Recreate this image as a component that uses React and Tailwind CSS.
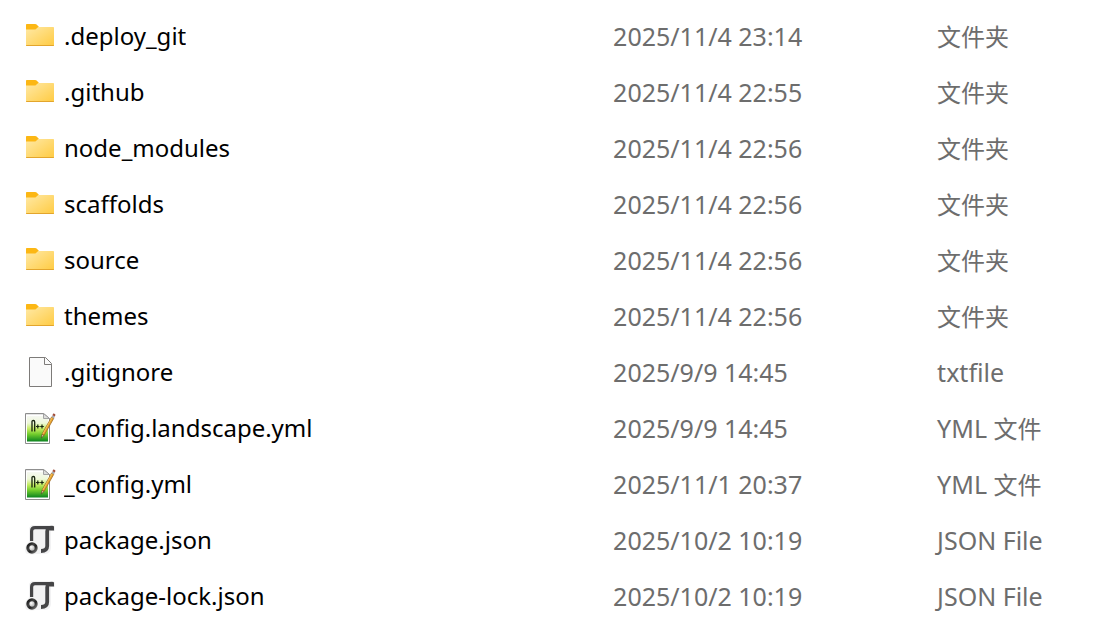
import React from 'react';

const files = [
  { name: '.deploy_git', date: '2025/11/4 23:14', kind: 'folder' },
  { name: '.github', date: '2025/11/4 22:55', kind: 'folder' },
  { name: 'node_modules', date: '2025/11/4 22:56', kind: 'folder' },
  { name: 'scaffolds', date: '2025/11/4 22:56', kind: 'folder' },
  { name: 'source', date: '2025/11/4 22:56', kind: 'folder' },
  { name: 'themes', date: '2025/11/4 22:56', kind: 'folder' },
  { name: '.gitignore', date: '2025/9/9 14:45', kind: 'text' },
  { name: '_config.landscape.yml', date: '2025/9/9 14:45', kind: 'yml' },
  { name: '_config.yml', date: '2025/11/1 20:37', kind: 'yml' },
  { name: 'package.json', date: '2025/10/2 10:19', kind: 'json' },
  { name: 'package-lock.json', date: '2025/10/2 10:19', kind: 'json' },
];

const FolderIcon = () => (
  <svg viewBox="0 0 32 32" className="size-8 shrink-0" aria-hidden="true">
    <defs>
      <linearGradient id="folder-front" x1="0" y1="0" x2="1" y2="1">
        <stop offset="0" stopColor="#ffe9a6" />
        <stop offset="1" stopColor="#ffcb42" />
      </linearGradient>
    </defs>
    <path d="M3 4h8.2c.6 0 1 .2 1.4.6L15 7l-3.4 4H2V5c0-.6.4-1 1-1z" fill="#fcb714" />
    <path d="M2 9.6h8.6c.6 0 1-.2 1.4-.6L14.2 7H29c.6 0 1 .4 1 1v17c0 .6-.4 1-1 1H3c-.6 0-1-.4-1-1z" fill="url(#folder-front)" />
    <path d="M2 25h28c0 .7-.4 1-1 1H3c-.6 0-1-.3-1-1z" fill="#e3a52c" />
  </svg>
);

const TextIcon = () => (
  <svg viewBox="0 0 32 32" className="size-8 shrink-0" aria-hidden="true">
    <path d="M5.5 1.5h16l6 6v23h-22z" fill="#fafafa" stroke="#7d7b79" />
    <path d="M20.5 1.5v7h7" fill="#fafafa" stroke="#7d7b79" />
  </svg>
);

const NotepadIcon = () => (
  <svg viewBox="0 0 32 32" className="size-8 shrink-0" aria-hidden="true">
    <defs>
      <linearGradient id="notepad-page" x1="0" y1="0" x2="0" y2="1">
        <stop offset="0" stopColor="#f6f8f2" />
        <stop offset=".28" stopColor="#eef8d8" />
        <stop offset=".5" stopColor="#c4ec62" />
        <stop offset=".72" stopColor="#70cb2c" />
        <stop offset="1" stopColor="#0b8420" />
      </linearGradient>
    </defs>
    <path d="M1.5 1.5h18l6 5v25h-24z" fill="#fff" stroke="#8c8c8c" />
    <path d="M3 4h16v3h5v22.5H3z" fill="url(#notepad-page)" />
    <path d="M2.5 2h17" stroke="#999" strokeDasharray="1 1" />
    <path d="M19.5 1.5l6 5h-6z" fill="#ddd" stroke="#909090" strokeWidth=".8" />
    <path d="M8 19.5V9.5c0-1.4 2.7-1.4 2.7.4v9.6" fill="none" stroke="#17230f" strokeWidth="1.3" />
    <path d="M12 14.5h3.6M13.8 12.5v4M16.2 14.5h3.6M18 12.5v4" stroke="#17230f" strokeWidth="1.2" />
    <path d="M17.3 26l.8-4 2 1.3z" fill="#f1d2a0" stroke="#4b3820" strokeWidth=".6" />
    <path d="M18.1 22L27.6 5l2.2 1.3-9.7 17z" fill="#e9a32c" stroke="#95601c" strokeWidth=".7" />
    <path d="M18.8 22L28 5.6" stroke="#ffd36c" strokeWidth=".7" />
    <path d="M27.6 5l.9-1.8 2.4 1.4-1 1.8z" fill="#a9acb2" />
    <path d="M28.4 3.2l.7-1.4c.5-.9 2.5.2 2.3 1.3l-.5 1.5z" fill="#a3503c" />
  </svg>
);

const JsonIcon = () => (
  <svg viewBox="0 0 32 32" className="size-8 shrink-0" aria-hidden="true">
    <defs>
      <linearGradient id="json-ring" x1="0" y1="0" x2="1" y2="1">
        <stop offset="0" stopColor="#111" />
        <stop offset=".35" stopColor="#444" />
        <stop offset=".6" stopColor="#222" />
        <stop offset="1" stopColor="#777" />
      </linearGradient>
      <radialGradient id="json-ball" cx=".4" cy=".4" r=".6">
        <stop offset="0" stopColor="#fff" />
        <stop offset="1" stopColor="#999" />
      </radialGradient>
    </defs>
    <path d="M9 1h19c2 0 3 1 3 3v3h-4v16c0 4-2 7-6 7H4c-2 0-3-2-3-5 0-3 2-5 4-6V5c0-2 2-4 4-4z" fill="#f2f2f3" />
    <path d="M7.6 17V7c0-2.2 1-3.4 3.4-3.4h18" fill="none" stroke="#454547" strokeWidth="3.2" />
    <path d="M28.5 3.6c-3 0-5.3 1-5.3 4v14.5c0 3.5-2 4.9-6.2 4.9" fill="none" stroke="#454547" strokeWidth="3.8" />
    <path d="M26 2h3c.7 0 1 .5 1 1v3.5h-4z" fill="#454547" />
    <circle cx="8" cy="24" r="6.8" fill="#f4f4f4" />
    <circle cx="8" cy="24" r="4.2" fill="url(#json-ball)" stroke="url(#json-ring)" strokeWidth="3" />
  </svg>
);

const icons = { folder: FolderIcon, text: TextIcon, yml: NotepadIcon, json: JsonIcon };

// Chinese glyphs sit one step smaller than the Latin text
const Cjk = ({ children }) => <span lang="zh-CN" className="text-2xl leading-none">{children}</span>;

const types = {
  folder: <Cjk>文件夹</Cjk>,
  text: 'txtfile',
  yml: <>YML <Cjk>文件</Cjk></>,
  json: 'JSON File',
};

const FileRow = ({ file }) => {
  const Icon = icons[file.kind];
  return (
    <tr className="h-14">
      <td className="p-0">
        <div className="flex items-center gap-2">
          <Icon />
          <span className="truncate text-2xl text-black">{file.name}</span>
        </div>
      </td>
      <td className="p-0">{file.date}</td>
      <td className="p-0">{types[file.kind]}</td>
    </tr>
  );
};

const App = () => (
  <main className="min-h-screen bg-white px-6 py-2 font-['Noto_Sans','Noto_Sans_CJK_SC',sans-serif] text-[25px] leading-8 text-[#6d6d6d]">
    <table className="w-full table-fixed border-collapse whitespace-nowrap" aria-label="Files">
      <colgroup>
        <col className="w-[56%]" />
        <col className="w-81" />
        <col />
      </colgroup>
      <tbody>
        {files.map(file => <FileRow key={file.name} file={file} />)}
      </tbody>
    </table>
  </main>
);

export default App;
